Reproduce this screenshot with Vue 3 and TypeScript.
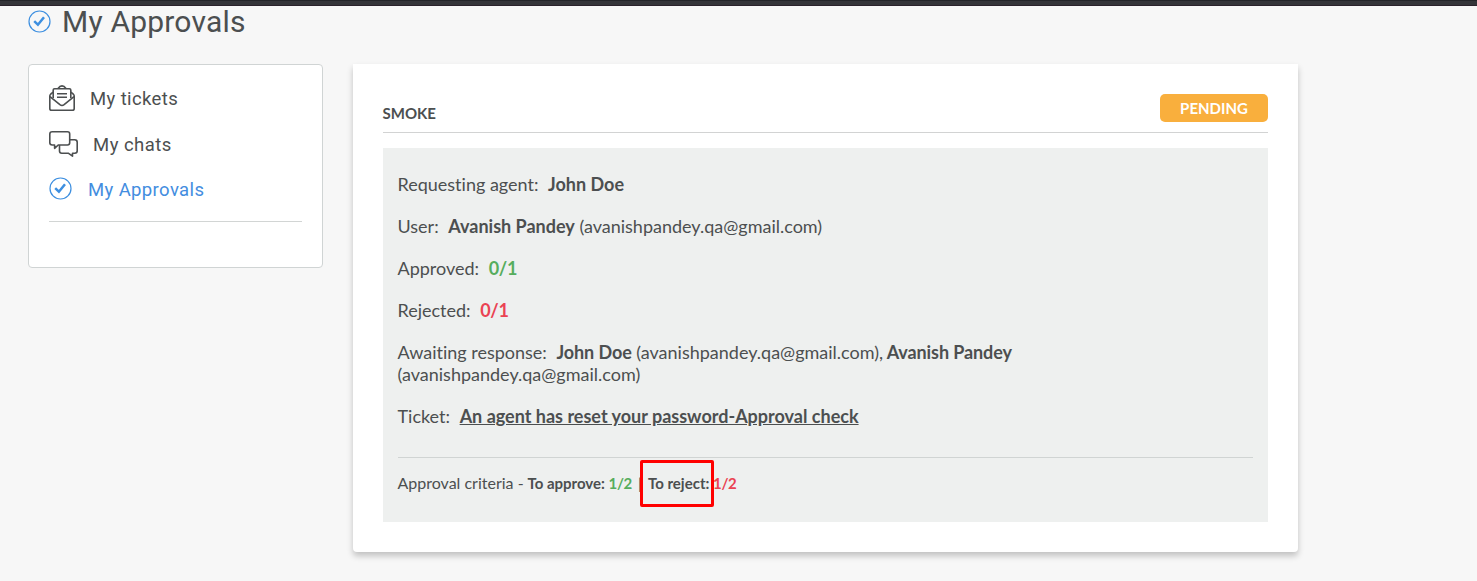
<script setup lang="ts">
interface Person {
  name: string
  email: string
}

const waiting: Person[] = [
  { name: 'John Doe', email: 'avanishpandey.qa@gmail.com' },
  { name: 'Avanish Pandey', email: 'avanishpandey.qa@gmail.com' },
]
</script>

<template>
  <div class="page">
    <div class="topbar"></div>
    <header class="heading">
      <svg class="check" viewBox="0 0 23 23" width="23" height="23" fill="none" stroke="#3d8fe0">
        <circle cx="11.5" cy="11.5" r="10.5" stroke-width="1.2" />
        <path d="M6.2 11.2l3.7 3.5 6.1-7.5" stroke-width="2.5" />
      </svg>
      <h1><span class="title">My Approvals</span></h1>
    </header>
    <main class="columns">
      <nav class="menu">
        <a class="item tickets">
          <svg width="26" height="26" viewBox="0 0 26 26" fill="none" stroke="#4c4f50" stroke-width="1.6" stroke-linejoin="round">
            <path d="M4.2 7.2L1.8 9Q.8 9.8.8 11v12.4q0 1.8 1.8 1.8h20.8q1.8 0 1.8-1.8V11q0-1.2-1-2l-2.4-1.8" />
            <path d="M4.2 13V5.1q0-1.4 1.4-1.4h14.8q1.4 0 1.4 1.4V13M8.8 3.7q4.2-5.6 8.4 0" />
            <path d="M1 11.6l9.9 8.1q2.1 1.6 4.2 0l9.9-8.1M8 8.8h10M8 12.3h10" />
          </svg>
          <span class="label">My tickets</span>
        </a>
        <a class="item chats">
          <svg width="29" height="26" viewBox="0 0 29 26" fill="none" stroke="#4c4f50" stroke-width="1.6" stroke-linejoin="round">
            <path d="M3.3.8h15.2q2.2 0 2.2 2.2v8.8q0 2.2-2.2 2.2H9.2l-3.6 3.3V14H3.3Q.8 14 .8 11.8V3Q.8.8 3.3.8z" />
            <path d="M20.7 8.7h5q2.5 0 2.5 2.5V20q0 2.2-2.5 2.2h-2.2v3L19.2 22.2h-6.5q-2.2 0-2.2-2.2v-6" />
          </svg>
          <span class="label">My chats</span>
        </a>
        <a class="item approvals">
          <svg class="check" viewBox="0 0 23 23" width="23" height="23" fill="none" stroke="#3d8fe0">
            <circle cx="11.5" cy="11.5" r="10.5" stroke-width="1.2" />
            <path d="M6.2 11.2l3.7 3.5 6.1-7.5" stroke-width="2.5" />
          </svg>
          <span class="label">My Approvals</span>
        </a>
        <div class="divider"></div>
      </nav>
      <section class="card">
        <div class="card-head">
          <h2>SMOKE</h2>
          <span class="badge">PENDING</span>
        </div>
        <div class="panel">
          <p>Requesting agent: <b>John Doe</b></p>
          <p>User: <b>Avanish Pandey</b> (avanishpandey.qa@gmail.com)</p>
          <p>Approved: <b class="green">0/1</b></p>
          <p>Rejected: <b class="red">0/1</b></p>
          <p class="waiting">Awaiting response: <template v-for="(p, i) in waiting" :key="i"><b :class="{ next: i > 0 }">{{ p.name }}</b> ({{ p.email }})<template v-if="i < waiting.length - 1">, </template></template></p>
          <p>Ticket: <b><a class="link">An agent has reset your password-Approval check</a></b></p>
          <div class="criteria">
            <span class="intro">Approval criteria - </span>
            <strong class="approve-label">To approve:</strong>
            <strong class="green">1/2</strong>
            <span class="bar">|</span>
            <strong class="reject-label">To reject:<span class="marker"></span></strong>
            <strong class="red">1/2</strong>
          </div>
        </div>
      </section>
    </main>
  </div>
</template>

<style>
body {
  margin: 0;
  background: #f7f7f7;
}
</style>

<style scoped>
.page {
  box-sizing: border-box;
  height: 581px;
  overflow: hidden;
  background: #f7f7f7;
  color: #4c4f50;
  font-family: Lato, sans-serif;
  font-variant-ligatures: none;
}
.topbar {
  box-sizing: border-box;
  height: 6px;
  background: #343539;
  border-top: 1px solid #242529;
  border-bottom: 1px solid #2a222b;
}
.heading {
  display: flex;
  height: 58px;
  padding: 0 28px;
  gap: 11px;
}
.heading svg {
  margin-top: 4px;
}
h1 {
  margin: -2px 0 0;
  font: 400 30px/36px Roboto, sans-serif;
  letter-spacing: 0.2px;
}
.columns {
  display: flex;
  align-items: flex-start;
  gap: 30px;
  padding-left: 28px;
}
.menu {
  box-sizing: border-box;
  width: 295px;
  height: 204px;
  padding: 20px 20px 0;
  border: 1px solid #d0d4d4;
  border-radius: 4px;
  background: #fff;
}
.item {
  display: flex;
  align-items: flex-start;
  font: 400 18.5px/26px Roboto, sans-serif;
  letter-spacing: 0.38px;
}
.tickets {
  gap: 15px;
  height: 46px;
}
.chats {
  gap: 15px;
  height: 46px;
}
.approvals {
  gap: 16px;
  height: 44px;
  color: #438de0;
}
.tickets .label,
.chats .label {
  margin-top: 1px;
}
.chats .label {
  letter-spacing: 0.48px;
}
.divider {
  height: 1px;
  background: #d2d5d4;
}
.card {
  box-sizing: border-box;
  width: 945px;
  height: 488px;
  padding: 30px;
  background: #fff;
  border-radius: 0 0 4px 4px;
  box-shadow: 0 4px 6px rgba(0, 0, 0, 0.22);
}
.card-head {
  box-sizing: border-box;
  display: flex;
  justify-content: space-between;
  align-items: flex-start;
  height: 39px;
  border-bottom: 1px solid #d2d3d3;
}
h2 {
  margin: 9px 0 0 -0.5px;
  font-size: 15px;
  line-height: 20px;
  font-weight: 700;
}
.badge {
  width: 108px;
  height: 28px;
  border-radius: 5px;
  background: #f9af3d;
  color: #fff;
  font-size: 15px;
  font-weight: 700;
  line-height: 29px;
  text-align: center;
}
.panel {
  box-sizing: border-box;
  height: 374px;
  margin-top: 15px;
  padding: 25px 15px 0 14.5px;
  background: #eef0ef;
}
p {
  width: 640px;
  margin: 0 0 20px;
  font-size: 18px;
  line-height: 22px;
}
b {
  margin-left: 5px;
  font-weight: 700;
}
.waiting b {
  letter-spacing: -0.1px;
}
b.next {
  margin-left: -1px;
}
.green,
.red {
  letter-spacing: -0.3px;
}
.green {
  color: #56ad5d;
}
.red {
  color: #ea4353;
}
.link {
  text-decoration: underline;
}
.criteria {
  display: flex;
  margin-top: 30px;
  padding-top: 14px;
  border-top: 1px solid #d0d4d3;
  font-size: 15px;
  line-height: 22px;
  white-space: nowrap;
}
strong {
  font-weight: 700;
}
.intro {
  width: 130px;
  font-size: 16px;
}
.approve-label {
  width: 81px;
}
.bar {
  width: 10px;
  margin-left: 6px;
}
.reject-label {
  position: relative;
  width: 65px;
}
.marker {
  position: absolute;
  box-sizing: border-box;
  left: -8px;
  top: -12px;
  width: 74px;
  height: 47px;
  border: 3px solid #f00;
  border-radius: 2px;
}
</style>
